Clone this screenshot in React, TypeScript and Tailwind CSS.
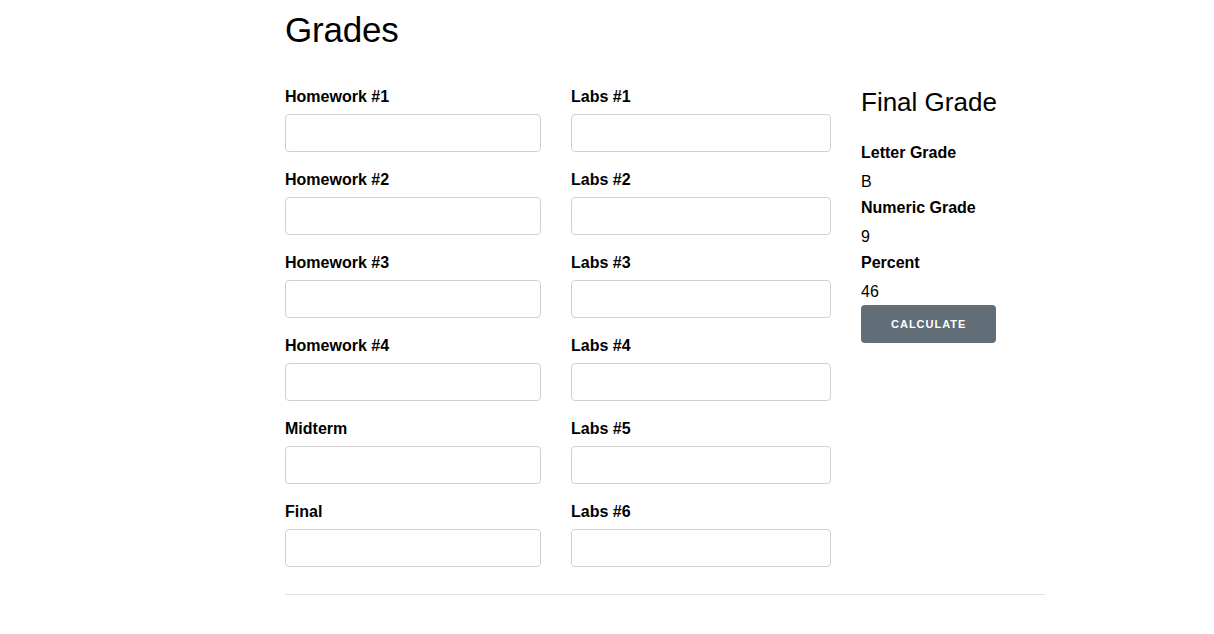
const homework = ["Homework #1", "Homework #2", "Homework #3", "Homework #4", "Midterm", "Final"];
const labs = ["Labs #1", "Labs #2", "Labs #3", "Labs #4", "Labs #5", "Labs #6"];

function Field({ label }: { label: string }) {
  return (
    <div>
      <label className="block h-6 leading-[26px] mb-1.5 text-[16px] font-bold text-black">{label}</label>
      <input
        type="text"
        className="block w-full h-[38px] mb-[15px] px-2.5 bg-white border border-[#d1d1d1] rounded focus:outline-none focus:border-[#33c3f0]"
      />
    </div>
  );
}

function Result({ label, value }: { label: string; value: string }) {
  return (
    <div>
      <div className="h-6 leading-[26px] mb-[5px] text-[16px] font-bold text-black">{label}</div>
      <div className="h-6 leading-[26px] mb-[2px] text-[16px] text-black">{value}</div>
    </div>
  );
}

export default function App() {
  return (
    <div className="min-h-screen bg-white font-['Liberation_Sans',Arial,sans-serif] text-black">
      <div className="ml-[285px] w-[760px] pt-[8px]">
        <h1 className="text-[35px] leading-[44px] font-normal tracking-[-0.2px]">Grades</h1>

        <div className="flex gap-[30px] mt-[32px]">
          <div className="w-[256px]">
            {homework.map((h) => (
              <Field key={h} label={h} />
            ))}
          </div>
          <div className="w-[260px]">
            {labs.map((l) => (
              <Field key={l} label={l} />
            ))}
          </div>
          <div className="flex-1">
            <h3 className="h-[34px] text-[26px] leading-[36px] font-normal mb-[22px]">Final Grade</h3>
            <Result label="Letter Grade" value="B" />
            <Result label="Numeric Grade" value="9" />
            <Result label="Percent" value="46" />
            <button className="h-[38px] px-[30px] bg-[#616d77] rounded text-white text-[11px] font-bold uppercase tracking-[1px]">
              Calculate
            </button>
          </div>
        </div>

        <hr className="mt-[12px] border-t border-[#e1e1e1]" />
      </div>
    </div>
  );
}
